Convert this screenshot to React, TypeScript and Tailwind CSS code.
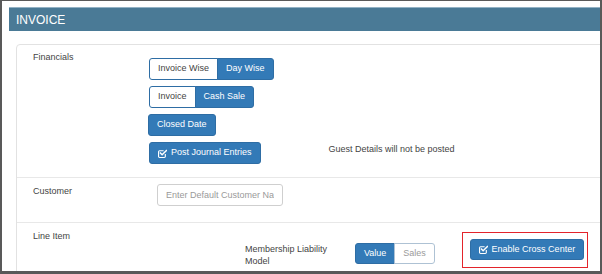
function CheckIcon() {
  return (
    <svg viewBox="0 0 16 16" className="w-[9px] h-[9px] mr-[4px] shrink-0" fill="none" stroke="currentColor">
      <path d="M13 9v4.2a1.8 1.8 0 0 1-1.8 1.8H2.8A1.8 1.8 0 0 1 1 13.2V4.8A1.8 1.8 0 0 1 2.8 3H10" strokeWidth="2" />
      <path d="M4.3 7.3l3 3L15 2.6" strokeWidth="2.6" strokeLinecap="square" />
    </svg>
  );
}

export default function App() {
  return (
    <div className="w-[602px] h-[274px] overflow-hidden bg-white border-[#595959] border-l-2 border-r-2 border-t border-b-[3px] font-['Liberation_Sans',Arial,sans-serif]">
      <div className="pl-[7px] pt-[6px]">
        <div className="h-[24px] bg-[#4a7a96] border-t border-[#93b2c5] flex items-center pl-[7px] text-white text-[12px]">
          INVOICE
        </div>

        <div className="mt-[13px] ml-[7px] -mr-4 border border-[#e2e2e2] rounded-tl-[4px] text-[9px] text-[#444]">
          {/* Financials */}
          <div className="flex items-start pl-4 pt-[6px] pb-[13px] border-b border-[#e8e8e8]">
            <div className="w-[116px] leading-[12px]">Financials</div>
            <div className="mt-[7px] flex flex-col gap-[6px]">
              <div className="flex h-[22px]">
                <div className="flex items-center px-[8px] bg-white text-[#444] border border-[#2e6da4] rounded-l-[3px]">Invoice Wise</div>
                <div className="flex items-center px-[8px] bg-[#337ab7] text-white border border-[#2e6da4] -ml-px rounded-r-[3px]">Day Wise</div>
              </div>
              <div className="flex h-[22px]">
                <div className="flex items-center px-[8px] bg-white text-[#444] border border-[#2e6da4] rounded-l-[3px]">Invoice</div>
                <div className="flex items-center px-[8px] bg-[#337ab7] text-white border border-[#2e6da4] -ml-px rounded-r-[3px]">Cash Sale</div>
              </div>
              <div className="flex h-[22px] -ml-px">
                <div className="flex items-center px-[8px] bg-[#337ab7] text-white border border-[#2e6da4] rounded-[3px]">Closed Date</div>
              </div>
              <div className="flex items-start">
                <div className="flex items-center h-[22px] px-[8px] bg-[#337ab7] text-white border border-[#2e6da4] rounded-[3px]">
                  <CheckIcon />
                  Post Journal Entries
                </div>
                <div className="ml-[68px] mt-[1px] leading-[12px] text-[#444]">Guest Details will not be posted</div>
              </div>
            </div>
          </div>

          {/* Customer */}
          <div className="flex items-start pl-4 pt-[6px] pb-[16px] border-b border-[#e8e8e8]">
            <div className="w-[116px] leading-[12px] mt-[1px]">Customer</div>
            <input
              className="ml-2 w-[126px] h-[22px] px-[8px] border border-[#cfcfcf] rounded-[3px] text-[9px] placeholder:text-[#9a9a9a] outline-none"
              placeholder="Enter Default Customer Name"
            />
          </div>

          {/* Line Item */}
          <div className="flex items-start pl-4 pt-[7px] pb-[20px]">
            <div className="w-[116px] leading-[12px]">Line Item</div>
            <div className="ml-[96px] mt-[13px] w-[100px] leading-[12px] text-[#444]">Membership Liability Model</div>
            <div className="ml-[10px] mt-[13px] flex h-[21px]">
              <div className="flex items-center px-[8px] bg-[#337ab7] text-white border border-[#2e6da4] rounded-l-[3px]">Value</div>
              <div className="flex items-center px-[8px] bg-white text-[#9a9a9a] border border-[#aec2d4] -ml-px rounded-r-[3px]">Sales</div>
            </div>
            <div className="ml-[27px] mt-[2px] border border-[#e3242b] pl-[7px] pr-[3px] pt-[6px] pb-[7px]">
              <div className="flex items-center justify-center w-[114px] h-[21px] bg-[#337ab7] text-white border border-[#2e6da4] rounded-[3px]">
                <CheckIcon />
                Enable Cross Center
              </div>
            </div>
          </div>
        </div>
      </div>
    </div>
  );
}
